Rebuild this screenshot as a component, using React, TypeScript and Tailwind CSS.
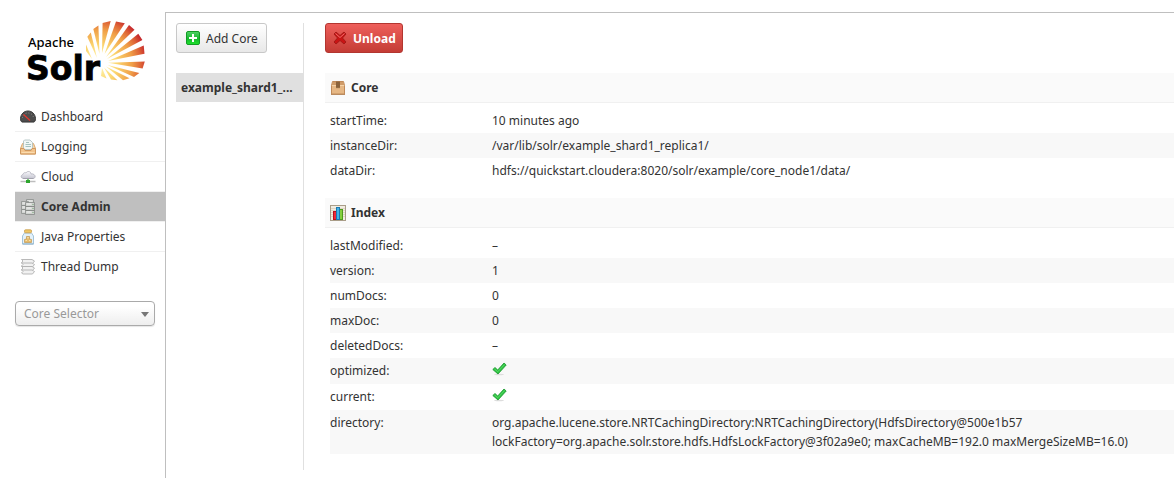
import type { ReactNode } from 'react';

const RAYS = [
  '86,44.5 86,51 92,59',
  '90.8,32.5 87.3,36.8 97,58',
  '98.4,25.5 93.3,29 99.500,54',
  '110.7,21 102.6,23 102,53',
  '124.8,23.2 116,21.5 104.500,54',
  '134.5,29.7 129,25 106,57',
  '142.4,40 138.3,33.7 107,59',
  '144.5,53.7 143.7,45.5 108,61',
  '142.6,68.500 144.8,61.5 108,62.700',
  '134,77 139.3,73 107.500,65',
  '123,80.3 129.5,78.300 106,66.500',
  '111,79.6 117.4,80.3 104,67.500',
  '101,76 106.500,78.500 102,68',
];

function Logo() {
  return (
    <svg viewBox="15 12 140 80" className="block h-20 w-[140px]" role="img" aria-label="Apache Solr">
      <defs>
        <radialGradient id="sun" gradientUnits="userSpaceOnUse" cx="98" cy="64" r="50">
          <stop offset="0.1" stopColor="#fff3a8" />
          <stop offset="0.38" stopColor="#fbd670" />
          <stop offset="0.68" stopColor="#f0a048" />
          <stop offset="0.86" stopColor="#de6436" />
          <stop offset="1" stopColor="#c5262c" />
        </radialGradient>
      </defs>
      {RAYS.map((points) => (
        <polygon key={points} points={points} fill="url(#sun)" />
      ))}
      <text x="28" y="47" fontFamily="'Noto Sans', sans-serif" fontSize="13" fontWeight="500">Apache</text>
      <text x="26" y="80" fontFamily="'DejaVu Sans', sans-serif" fontSize="33" fontWeight="700" stroke="#000" strokeWidth=".8">Solr</text>
    </svg>
  );
}

function Icon({ children }: { children: ReactNode }) {
  return (
    <svg viewBox="0 0 16 16" className="size-4 shrink-0" aria-hidden="true">
      {children}
    </svg>
  );
}

function DashboardIcon() {
  return (
    <Icon>
      <path d="M.5 9.5C.8 5 4 2 8 2s7.200 3 7.500 7.500c.1 2-.5 3-1.500 3.500H2C1 12.500.4 11.500.5 9.500z" fill="#4d4d4d" stroke="#393939" />
      <path d="M2.500 9a5.500 5 0 0 1 11 0" fill="none" stroke="#8c8c8c" strokeDasharray="1 1.800" />
      <path d="M3.500 5.500l6.500 6" stroke="#e3352c" strokeWidth="1.200" />
      <path d="M2 13.500h12" stroke="#8a8a8a" strokeWidth=".8" />
    </Icon>
  );
}

function LoggingIcon() {
  return (
    <Icon>
      <path d="M2.500 4.500h11l2 5v5.500H.5V9.500z" fill="#f6d6a8" stroke="#d9a871" />
      <path d="M4.500 1h5.500l2.500 2.500v7h-9V2z" fill="#f1f7f6" stroke="#a9bcbe" strokeWidth=".8" />
      <path d="M6 3.500h3M5.500 5.500h5.500M5.500 7.500h5.500" stroke="#a5c3bf" />
      <path d="M.5 9.500h3.500l1 2h6l1-2h3.500V15H.5z" fill="#f3c48c" stroke="#cf9960" />
      <path d="M1.500 13.500h13" stroke="#fbdcae" />
    </Icon>
  );
}

function CloudIcon() {
  return (
    <Icon>
      <defs>
        <linearGradient id="cloud" x2="0" y2="1">
          <stop stopColor="#fafafd" />
          <stop offset="1" stopColor="#c4c4d0" />
        </linearGradient>
      </defs>
      <path d="M3.500 9.500C.8 9.500.2 6.200 3 5.500 3.300 3.500 5.300 3.300 6 4c1-2.300 5-2 5 1 3.500-1 6 3.500 2.500 4.500z" fill="url(#cloud)" stroke="#b0b0bb" strokeWidth=".8" />
      <path d="M3 9.500h10.500" stroke="#9c9ca6" strokeWidth=".8" />
      <path d="M8 10v2" stroke="#5db65d" strokeWidth="1.500" />
      <path d="M.5 12.500h15" stroke="#bdbdbd" strokeWidth="1.500" />
      <path d="M6 12.500h4" stroke="#2da52d" strokeWidth="3" />
    </Icon>
  );
}

function ServersIcon() {
  return (
    <Icon>
      {[
        [6.5, 0.5],
        [1.5, 2.5],
      ].map(([x, y]) => (
        <g key={x} fill="#d3d5d3" stroke="#8b8f8d" strokeWidth=".8">
          <path d={`M${x} ${y}h7v4h-7zM${x} ${y + 4}h7v4h-7zM${x} ${y + 8}h7v4h-7z`} />
          <path d={`M${x + 1} ${y + 1.5}h5M${x + 1} ${y + 5.5}h5M${x + 1} ${y + 9.5}h5`} stroke="#f4f4f4" />
        </g>
      ))}
      <path d="M5.500 3.500h9v4h-9zM5.500 7.500h9v4h-9zM5.500 11.500h9v4h-9z" fill="#cfd2cf" stroke="#858987" strokeWidth=".8" />
      <path d="M6.500 5h5M6.500 9h5M6.500 13h5" stroke="#f6f6f6" />
      <path d="M12.500 5.500h1M12.500 9.500h1M12.500 13.500h1" stroke="#6fa56f" />
    </Icon>
  );
}

function JarIcon() {
  return (
    <Icon>
      <path d="M4.500 4h7l2 3v8h-11V7z" fill="#e3f1fa" stroke="#a3c4da" />
      <rect x="4.500" y=".8" width="7" height="3" rx="1" fill="#f0c765" stroke="#c69b48" strokeWidth=".8" />
      <path d="M4.500 13.500v-3l2-.5V7.500h3V10l2 .5v3z" fill="#e5bb6c" stroke="#c29650" strokeWidth=".7" />
      <path d="M5.500 11.500h1.500M9 11.500h1.500M7 8.800h2" stroke="#fae3ad" />
      <path d="M2.500 15h11" stroke="#8fb0c6" />
    </Icon>
  );
}

function ThreadIcon() {
  return (
    <Icon>
      {[0.5, 4, 7.5, 11].map((y) => (
        <path key={y} d={`M1.500 ${y}h10.500l2.500 1.500-2 2.500H3L1.500 ${y + 3}l1.500-1.500z`} fill="#f1f1f1" stroke="#a8a8a8" strokeWidth=".8" />
      ))}
    </Icon>
  );
}

function PlusIcon() {
  return (
    <Icon>
      <defs>
        <linearGradient id="plus" x2="0" y2="1">
          <stop stopColor="#52d168" />
          <stop offset=".55" stopColor="#15b92c" />
          <stop offset="1" stopColor="#1ee22c" />
        </linearGradient>
      </defs>
      <rect x="1.500" y="1.500" width="13" height="13" rx="1.500" fill="url(#plus)" stroke="#129c24" />
      <path d="M8 4v8M4 8h8" stroke="#fff" strokeWidth="2" />
    </Icon>
  );
}

function CrossIcon() {
  return (
    <Icon>
      <path
        d="M2 4l2-2 4 3.500L12 2l2 2-3.500 4 3.500 4-2 2-4-3.500L4 14l-2-2 3.500-4z"
        fill="#c91414"
        stroke="#9d1513"
        strokeWidth=".8"
        strokeLinejoin="round"
      />
      <path d="M3.500 3.500L8 7.500l4.500-4" fill="none" stroke="#f07070" />
    </Icon>
  );
}

function BoxIcon() {
  return (
    <Icon>
      <path d="M2.500 1.500h11l1 4v8.500h-13V5.500z" fill="#e6b784" stroke="#c08a59" />
      <path d="M2.500 2h11l.5 3H2z" fill="#cf9b68" />
      <path d="M2 5.500h12" stroke="#f5d3a8" />
      <path d="M6 1.500h4v7l-1-1-1 1-1-1-1 1z" fill="#8b633c" />
      <path d="M1 14.500h14" stroke="#b98b60" />
    </Icon>
  );
}

function ChartIcon() {
  return (
    <Icon>
      <rect x=".5" y=".5" width="15" height="15" fill="#f1ece1" stroke="#a99d88" />
      <path d="M1 3.500h14M1 5.500h14M1 7.500h14M1 9.500h14M1 11.500h14" stroke="#ddd5c5" />
      <rect x="3.500" y="6.500" width="3" height="8" fill="#ef2835" stroke="#b8101f" />
      <rect x="9.500" y="4.500" width="3" height="10" fill="#84cf3c" stroke="#4d9b1d" />
      <rect x="6.500" y="2.500" width="3" height="12" fill="#3fb4e8" stroke="#1b78b2" />
    </Icon>
  );
}

function Tick() {
  return (
    <svg viewBox="0 0 16 16" className="block size-4" role="img" aria-label="yes">
      <ellipse cx="7" cy="13.500" rx="5" ry=".8" fill="#ddd" />
      <path d="M.8 8.500L3 6.500l2.700 2.500L12 2l2.200 2L6 13z" fill="#2fc443" stroke="#17962b" strokeWidth=".8" />
      <path d="M2.500 8l3.300 2.700L12.500 3.500" fill="none" stroke="#60dc6c" strokeWidth=".8" />
    </svg>
  );
}

const NAV = [
  { label: 'Dashboard', icon: <DashboardIcon /> },
  { label: 'Logging', icon: <LoggingIcon /> },
  { label: 'Cloud', icon: <CloudIcon /> },
  { label: 'Core Admin', icon: <ServersIcon />, active: true },
  { label: 'Java Properties', icon: <JarIcon /> },
  { label: 'Thread Dump', icon: <ThreadIcon /> },
];

type Row = [string, ReactNode];

const CORE: Row[] = [
  ['startTime', '10 minutes ago'],
  ['instanceDir', '/var/lib/solr/example_shard1_replica1/'],
  ['dataDir', 'hdfs://quickstart.cloudera:8020/solr/example/core_node1/data/'],
];

const INDEX: Row[] = [
  ['lastModified', '–'],
  ['version', '1'],
  ['numDocs', '0'],
  ['maxDoc', '0'],
  ['deletedDocs', '–'],
  ['optimized', <Tick />],
  ['current', <Tick />],
  [
    'directory',
    'org.apache.lucene.store.NRTCachingDirectory:NRTCachingDirectory(HdfsDirectory@500e1b57 lockFactory=org.apache.solr.store.hdfs.HdfsLockFactory@3f02a9e0; maxCacheMB=192.0 maxMergeSizeMB=16.0)',
  ],
];

function Section({ title, icon, rows }: { title: string; icon: ReactNode; rows: Row[] }) {
  return (
    <section>
      <h2 className="flex h-[30px] items-center gap-[5px] border-b border-[#f0f0f0] bg-[#fafafa] pl-[5px] font-bold">
        {icon}
        {title}
      </h2>
      <table className="mt-[5px] ml-[5px] w-[calc(100%-5px)] table-fixed border-collapse text-left">
        <tbody>
          {rows.map(([name, value]) => (
            <tr key={name} className="align-top even:bg-[#f8f8f8]">
              <th scope="row" className="w-[162px] py-[3px] font-normal">{name}:</th>
              <td className={typeof value === 'string' ? 'py-[3px]' : 'pt-[3px] pb-[7px]'}>{value}</td>
            </tr>
          ))}
        </tbody>
      </table>
    </section>
  );
}

export default function App() {
  return (
    <div className="flex min-h-screen bg-white pt-3 pl-[15px] font-['Noto_Sans',sans-serif] text-[12px] leading-[19px] text-[#333]">
      <aside className="w-[150px] shrink-0">
        <Logo />
        <nav className="mt-[10px]">
          {NAV.map(({ label, icon, active }) => (
            <a
              key={label}
              href="#"
              className={
                active
                  ? 'flex h-[30px] items-center gap-[5px] border-b border-[#f0f0f0] bg-[#bfbfbf] pl-[5px] font-bold'
                  : 'flex h-[30px] items-center gap-[5px] border-b border-[#f0f0f0] pl-[5px] last:border-transparent'
              }
            >
              {icon}
              {label}
            </a>
          ))}
        </nav>
        <div className="relative mt-[19px] mr-[10px]">
          <select
            aria-label="Core Selector"
            className="block h-[25px] w-full appearance-none rounded-[4px] border border-[#aaa] bg-linear-to-b from-white from-20% to-[#eee] pl-2 text-[#999] shadow-[0_1px_1px_rgba(0,0,0,0.1)]"
          >
            <option>Core Selector</option>
          </select>
          <svg viewBox="0 0 8 5" className="pointer-events-none absolute top-[11px] right-[6px] h-[5px] w-2" aria-hidden="true">
            <path d="M0 0h8L4 5z" fill="#777" />
          </svg>
        </div>
      </aside>
      <main className="flex min-w-0 grow border-t border-l border-[#bfbfbf] pt-[10px] pb-2 pl-[10px]">
        <div className="w-32 shrink-0 border-r border-[#e0e0e0]">
          <button
            type="button"
            className="flex h-[30px] items-center gap-[5px] rounded-[3px] border border-[#c8c8c8] bg-linear-to-b from-white to-[#e8e8e8] px-2"
          >
            <PlusIcon />
            Add Core
          </button>
          <a href="#" className="mt-5 block bg-[#e0e0e0] px-[5px] py-[5px] font-bold whitespace-nowrap">
            example_shard1_...
          </a>
        </div>
        <div className="ml-[21px] min-w-0 grow">
          <button
            type="button"
            className="flex h-[30px] items-center gap-[5px] rounded-[3px] border border-[#b33630] bg-linear-to-b from-[#ee5f5b] to-[#c43c35] px-[6px] font-bold text-white"
          >
            <CrossIcon />
            Unload
          </button>
          <div className="mt-5 flex flex-col gap-[15px]">
            <Section title="Core" icon={<BoxIcon />} rows={CORE} />
            <Section title="Index" icon={<ChartIcon />} rows={INDEX} />
          </div>
        </div>
      </main>
    </div>
  );
}
